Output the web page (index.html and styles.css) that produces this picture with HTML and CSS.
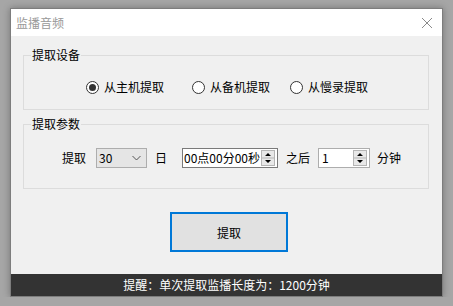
FILE: index.html
```html
<!DOCTYPE html>
<html lang="zh-CN">

<head>
  <meta charset="UTF-8">
  <title>监播音频</title>
  <link rel="stylesheet" href="styles.css">
</head>

<body>
  <div class="window">
    <div class="titlebar">
      <span class="title">监播音频</span>
      <svg class="close" width="12" height="12" viewBox="0 0 12 12">
        <path d="M1 1 L11 11 M11 1 L1 11" stroke="#8a8a8a" stroke-width="1" fill="none" />
      </svg>
    </div>

    <div class="content">
      <div class="group group-device">
        <span class="legend">提取设备</span>
        <div class="radios">
          <label class="radio"><span class="dot checked"></span>从主机提取</label>
          <label class="radio r2"><span class="dot"></span>从备机提取</label>
          <label class="radio r3"><span class="dot"></span>从慢录提取</label>
        </div>
      </div>

      <div class="group group-params">
        <span class="legend">提取参数</span>
        <div class="params">
          <span class="lbl">提取</span>
          <div class="select">
            <span>30</span>
            <svg width="9" height="6" viewBox="0 0 9 6">
              <path d="M0.5 1 L4.5 5 L8.5 1" stroke="#555" fill="none" />
            </svg>
          </div>
          <span class="lbl day">日</span>
          <div class="spin spin-time">
            <span class="val">00点00分00秒</span>
            <span class="arrows">
              <svg width="14" height="16" viewBox="0 0 14 16">
                <rect x="0.5" y="0.5" width="13" height="15" fill="#e8e8e8" stroke="#b5b5b5" />
                <line x1="1" y1="8" x2="13" y2="8" stroke="#b5b5b5" />
                <path d="M4 6 L7 3 L10 6 Z M4 10 L10 10 L7 13 Z" fill="#000" />
              </svg>
            </span>
          </div>
          <span class="lbl after">之后</span>
          <div class="spin spin-num">
            <span class="val">1</span>
            <span class="arrows">
              <svg width="14" height="16" viewBox="0 0 14 16">
                <rect x="0.5" y="0.5" width="13" height="15" fill="#e8e8e8" stroke="#b5b5b5" />
                <line x1="1" y1="8" x2="13" y2="8" stroke="#b5b5b5" />
                <path d="M4 6 L7 3 L10 6 Z M4 10 L10 10 L7 13 Z" fill="#000" />
              </svg>
            </span>
          </div>
          <span class="lbl">分钟</span>
        </div>
      </div>

      <button class="btn">提取</button>
    </div>

    <div class="footer">提醒：单次提取监播长度为：1200分钟</div>
  </div>
</body>

</html>
```

FILE: styles.css
```css
* {
  margin: 0;
  padding: 0;
  box-sizing: border-box;
  font-family: "Noto Sans CJK SC", "Microsoft YaHei", sans-serif;
}

body {
  background: #a6a6a6;
  padding: 8px 0 0 10px;
  font-size: 12px;
  color: #000;
}

/* Window */
.window {
  width: 433px;
  height: 289px;
  border: 1px solid #7d7d7d;
  background: #f0f0f0;
  box-shadow: 0 0 7px rgba(0, 0, 0, 0.3);
  display: flex;
  flex-direction: column;
}

.titlebar {
  height: 27px;
  background: #fff;
  display: flex;
  align-items: center;
  justify-content: space-between;
  padding: 0 9px 0 5px;
}

.title {
  color: #999;
  font-size: 12px;
  line-height: 16px;
}

.close {
  display: block;
}

/* Content */
.content {
  height: 238px;
  padding: 19px 13px 0 12px;
}

.group {
  position: relative;
  border: 1px solid #dcdcdc;
}

.legend {
  position: absolute;
  top: -9px;
  left: 7px;
  padding: 0 1px;
  background: #f0f0f0;
  line-height: 16px;
}

.group-device {
  height: 55px;
}

.radios {
  display: flex;
  padding: 23px 0 0 62px;
}

.radio {
  display: flex;
  align-items: center;
  gap: 5px;
  line-height: 16px;
}

.radio.r2 {
  margin-left: 28px;
}

.radio.r3 {
  margin-left: 20px;
}

.dot {
  width: 13px;
  height: 13px;
  border: 1px solid #333;
  border-radius: 50%;
  background: #fff;
  display: flex;
  align-items: center;
  justify-content: center;
}

.dot.checked::after {
  content: "";
  width: 7px;
  height: 7px;
  border-radius: 50%;
  background: #333;
}

.group-params {
  height: 65px;
  margin-top: 14px;
}

.params {
  display: flex;
  align-items: center;
  padding: 23px 0 0 38px;
}

.lbl {
  line-height: 16px;
}

.select {
  width: 51px;
  height: 20px;
  margin-left: 10px;
  border: 1px solid #adadad;
  background: #e5e5e5;
  display: flex;
  align-items: center;
  justify-content: space-between;
  padding: 0 5px 0 2px;
  line-height: 16px;
}

.day {
  margin-left: 8px;
}

.spin {
  height: 20px;
  background: #fff;
  display: flex;
  align-items: center;
  justify-content: space-between;
  padding: 0 2px 0 1px;
  line-height: 16px;
}

.spin .arrows {
  display: flex;
}

.spin-time {
  width: 96px;
  margin-left: 15px;
  border: 1px solid #7a7a7a;
}

.spin-num {
  width: 52px;
  margin-left: 8px;
  margin-right: 7px;
  border: 1px solid #adadad;
  padding-left: 3px;
}

.after {
  margin-left: 8px;
}

.btn {
  display: block;
  width: 118px;
  height: 40px;
  margin: 23px 0 0 147px;
  border: 2px solid #0078d7;
  background: #e1e1e1;
  font-size: 12px;
  color: #000;
}

/* Footer */
.footer {
  height: 22px;
  background: #333;
  color: #fff;
  text-align: center;
  line-height: 22px;
}
```
